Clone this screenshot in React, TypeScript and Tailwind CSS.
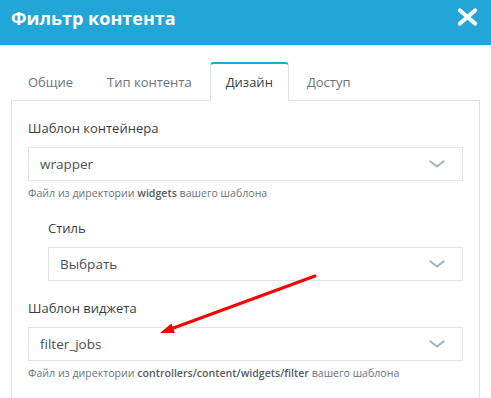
import React from "react";

const tabs = [
  { label: "Общие", active: false },
  { label: "Тип контента", active: false },
  { label: "Дизайн", active: true },
  { label: "Доступ", active: false },
];

const Chevron = () => (
  <svg width="16" height="8" viewBox="0 0 16 8" fill="none">
    <path d="M1.5 1.5l6.5 5 6.5-5" stroke="#aab2ba" strokeWidth="2.2" strokeLinecap="round" strokeLinejoin="round" />
  </svg>
);

const Select = ({ value }: { value: string }) => (
  <div className="flex h-[34px] items-center justify-between border border-[#e2e5e8] bg-white pl-[11px] pr-[17px] text-[13.5px] text-[#495057]">
    <span>{value}</span>
    <Chevron />
  </div>
);

const Label = ({ children }: { children: React.ReactNode }) => (
  <div className="mb-[8px] text-[13px] leading-[21px] text-[#3a3f44]">{children}</div>
);

const Hint = ({ dir }: { dir: string }) => (
  <div className="mt-[4px] text-[10.6px] leading-[16px] text-[#6c757d]">
    Файл из директории <b className="font-semibold text-[#555c63]">{dir}</b> вашего шаблона
  </div>
);

export default function App() {
  return (
    <div className="relative h-[398px] w-[491px] overflow-hidden bg-white font-['Open_Sans','Noto_Sans',sans-serif]">
      <header className="flex h-[45px] items-start justify-between bg-[#22a6d8] pl-[11px] pr-[13px]">
        <h1 className="mt-[6px] text-[18px] font-bold leading-[25px] text-white">Фильтр контента</h1>
        <svg className="mt-[8px]" width="21" height="18" viewBox="0 0 21 18" fill="none">
          <path d="M3 2.5l15 13M18 2.5l-15 13" stroke="white" strokeWidth="4.2" strokeLinecap="round" />
        </svg>
      </header>

      <div className="mx-[11px] mt-[17px]">
        <nav className="relative z-10 -mb-px flex pl-px">
          {tabs.map((t) => (
            <div
              key={t.label}
              className={`mr-[2px] rounded-t-[4px] border-x border-t-2 border-b px-[15px] pt-[8px] pb-[7px] text-[13px] leading-[21px] ${
                t.active
                  ? "border-x-[#dee2e6] border-t-[#22a6d8] border-b-white bg-white text-[#3a3f44]"
                  : "border-transparent text-[#6c757d]"
              }`}
            >
              {t.label}
            </div>
          ))}
        </nav>

        <section className="border border-[#dee2e6] px-[16px] pt-[17px] pb-[40px]">
          <Label>Шаблон контейнера</Label>
          <Select value="wrapper" />
          <Hint dir="widgets" />

          <div className="mt-[17px] pl-[20px]">
            <Label>Стиль</Label>
            <Select value="Выбрать" />
          </div>

          <div className="mt-[17px]">
            <Label>Шаблон виджета</Label>
            <Select value="filter_jobs" />
            <Hint dir="controllers/content/widgets/filter" />
          </div>
        </section>
      </div>

      {/* red pointer arrow drawn over the form */}
      <svg className="pointer-events-none absolute left-0 top-0" width="491" height="398">
        <line x1="315" y1="276" x2="168" y2="330" stroke="#ff0000" strokeWidth="3" strokeLinecap="round" />
        <polygon points="160,333 171.4,323.5 174.8,332.9" fill="#ff0000" />
      </svg>
    </div>
  );
}
